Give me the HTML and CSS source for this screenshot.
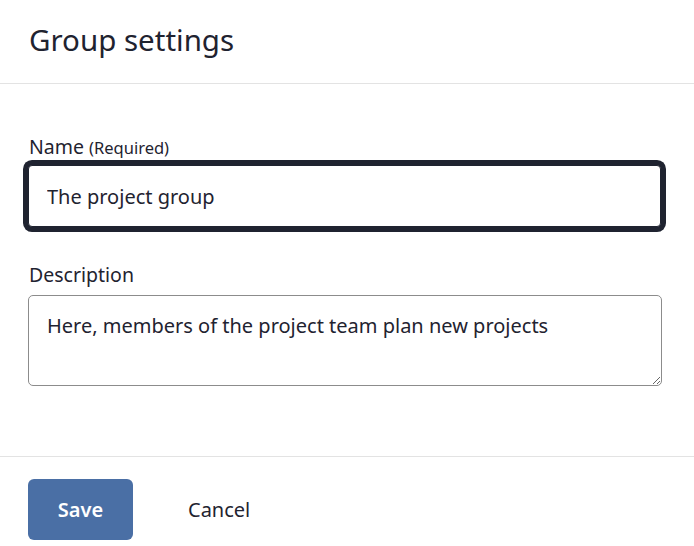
FILE: index.html
```html
<!DOCTYPE html>
<html lang="en">
<head>
<meta charset="utf-8">
<title>Group settings</title>
<link rel="stylesheet" href="styles.css">
</head>
<body>
<div class="dialog">
  <header class="dialog-header">
    <h1 class="dialog-title">Group settings</h1>
  </header>
  <form class="dialog-body">
    <label class="field-label" for="name">Name <span class="field-hint">(Required)</span></label>
    <input class="text-input" id="name" type="text" value="The project group">
    <label class="field-label field-label--desc" for="desc">Description</label>
    <textarea class="text-area" id="desc">Here, members of the project team plan new projects</textarea>
  </form>
  <footer class="dialog-footer">
    <button class="btn btn-primary" type="button">Save</button>
    <button class="btn btn-plain" type="button">Cancel</button>
  </footer>
</div>
</body>
</html>
```

FILE: styles.css
```css
* { box-sizing: border-box; }
html, body {
  margin: 0;
  padding: 0;
  background: #ffffff;
}
body {
  font-family: "Noto Sans", "Open Sans", sans-serif;
  color: #1f2330;
  width: 694px;
  height: 546px;
  overflow: hidden;
}
.dialog-header {
  height: 84px;
  border-bottom: 1px solid #e3e3e3;
  padding: 0 0 0 29px;
  display: flex;
  align-items: center;
}
.dialog-title {
  margin: 0;
  font-size: 29.5px;
  font-weight: 400;
  line-height: 36px;
  color: #1f2330;
  padding-bottom: 4px;
}
.dialog-body {
  display: flex;
  flex-direction: column;
  padding: 51px 32px 70px 28px;
  border-bottom: 1px solid #e3e3e3;
}
.field-label {
  display: block;
  font-size: 19.5px;
  line-height: 24px;
  height: 24px;
  padding-left: 1px;
  margin-bottom: 6px;
}
.field-hint {
  font-size: 16.5px;
  line-height: 1;
}
.text-input {
  width: 633px;
  height: 62px;
  border: 1px solid #1f2330;
  border-radius: 4px;
  box-shadow: 0 0 0 5px #1f2330;
  padding: 0 18px;
  font-family: inherit;
  font-size: 20px;
  color: #1f2330;
  outline: none;
}
.field-label--desc {
  margin-top: 36px;
  margin-bottom: 8px;
}
.text-area {
  width: 634px;
  height: 91px;
  border: 1px solid #8c8c8c;
  border-radius: 5px;
  padding: 17px 18px;
  font-family: inherit;
  font-size: 20px;
  line-height: 26px;
  color: #1f2330;
  resize: both;
}
.dialog-footer {
  display: flex;
  gap: 27px;
  padding: 22px 28px 0;
}
.btn {
  height: 61px;
  padding: 0 28px;
  border: none;
  border-radius: 6px;
  font-family: inherit;
  font-size: 20px;
  cursor: pointer;
}
.btn-primary {
  width: 105px;
  padding: 0;
  background: #4a6fa5;
  color: #ffffff;
  font-weight: 600;
}
.btn-plain {
  background: transparent;
  color: #1f2330;
  font-weight: 400;
}
```
